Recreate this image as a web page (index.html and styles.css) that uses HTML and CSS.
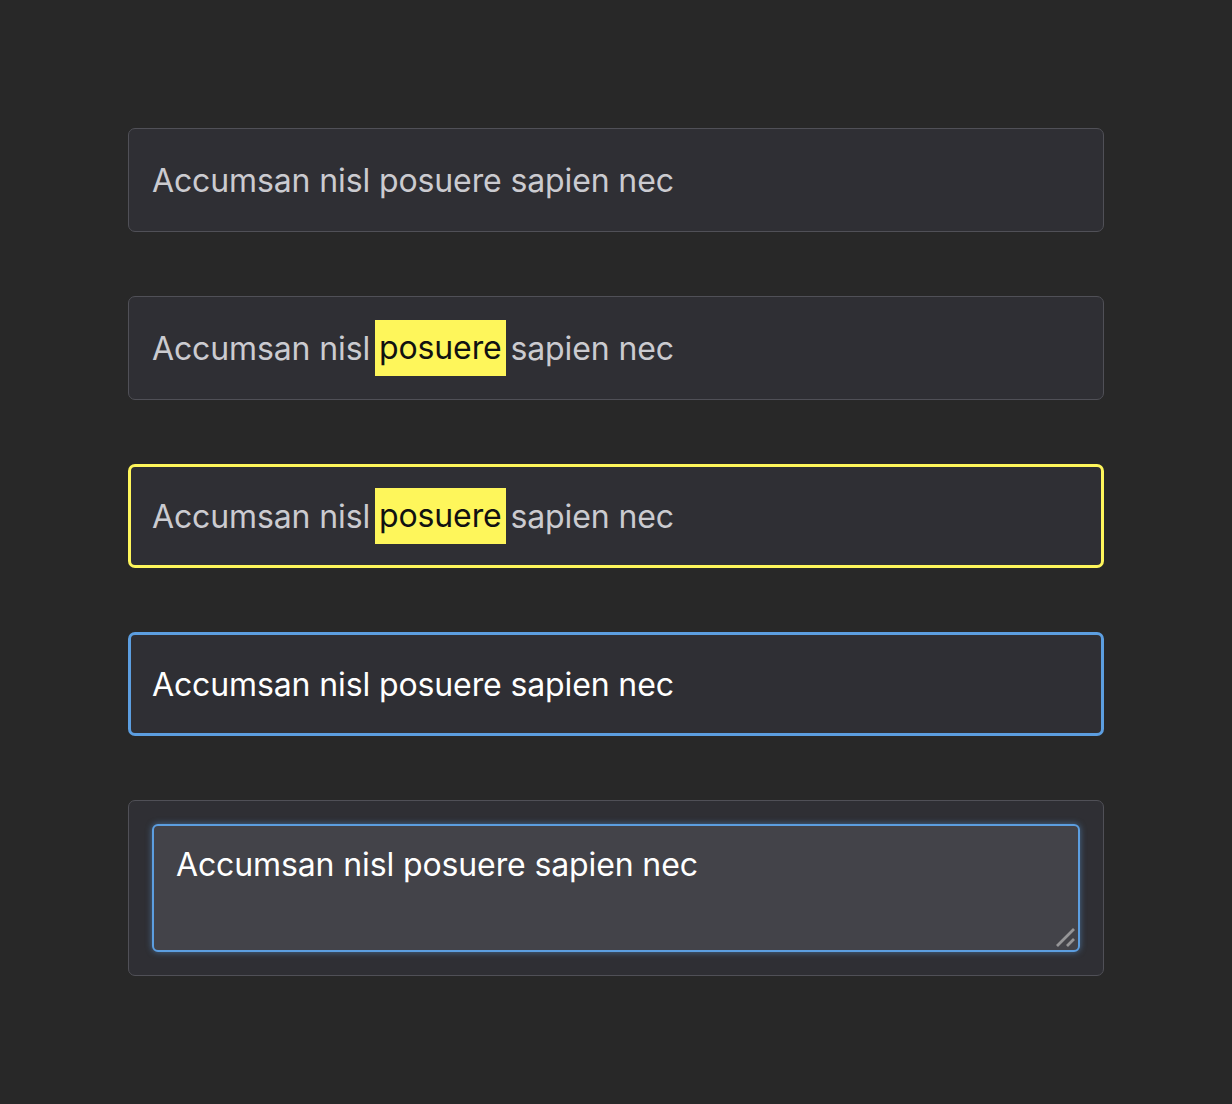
FILE: index.html
```html
<!DOCTYPE html>
<html lang="en">
<head>
<meta charset="utf-8">
<title>Fields</title>
<link rel="stylesheet" href="styles.css">
</head>
<body>
<main class="stack">
  <div class="field">Accumsan nisl posuere sapien nec</div>
  <div class="field">Accumsan nisl <mark class="hl">posuere</mark> sapien nec</div>
  <div class="field field-match">Accumsan nisl <mark class="hl">posuere</mark> sapien nec</div>
  <div class="field field-focus">Accumsan nisl posuere sapien nec</div>
  <div class="field-wrap">
    <div class="area-box">
      <textarea class="area">Accumsan nisl posuere sapien nec</textarea>
      <svg class="grip" width="20" height="20" viewBox="0 0 20 20" aria-hidden="true">
        <path d="M1 18 L18 1 M11 18 L18 11" stroke="#959597" stroke-width="2.8" fill="none"/>
      </svg>
    </div>
  </div>
</main>
</body>
</html>
```

FILE: styles.css
```css
html, body {
  margin: 0;
  padding: 0;
  background: #282828;
}
body {
  font-family: Inter, "Noto Sans", sans-serif;
}
.stack {
  display: flex;
  flex-direction: column;
  gap: 64px;
  padding: 128px 128px 0 128px;
}
.field {
  box-sizing: border-box;
  height: 104px;
  display: flex;
  align-items: center;
  padding-left: 23px;
  background: #2f2f34;
  border: 1px solid #505057;
  border-radius: 7px;
  color: #cbcbd0;
  font-size: 32px;
  letter-spacing: -0.12px;
  white-space: pre;
}
.field-match {
  border: 3px solid #fef65b;
  padding-left: 21px;
}
.field-focus {
  border: 3px solid #5c9ee0;
  padding-left: 21px;
  color: #ffffff;
}
.hl {
  display: inline-block;
  background: #fef65b;
  color: #111111;
  padding: 0 4px;
  margin: 0 -4px;
  line-height: 56px;
}
.field-wrap {
  box-sizing: border-box;
  height: 176px;
  padding: 23px;
  background: #2f2f34;
  border: 1px solid #505057;
  border-radius: 7px;
}
.area-box {
  position: relative;
}
.area {
  display: block;
  box-sizing: border-box;
  width: 100%;
  height: 128px;
  margin: 0;
  padding: 19px 22px;
  background: #434349;
  border: 2px solid #5c9ee0;
  border-radius: 6px;
  box-shadow: 0 0 6px rgba(92, 158, 224, 0.55);
  outline: none;
  resize: none;
  color: #ffffff;
  font-family: Inter, "Noto Sans", sans-serif;
  font-size: 32px;
  letter-spacing: -0.12px;
  line-height: normal;
}
.grip {
  position: absolute;
  right: 4px;
  bottom: 4px;
}
```
